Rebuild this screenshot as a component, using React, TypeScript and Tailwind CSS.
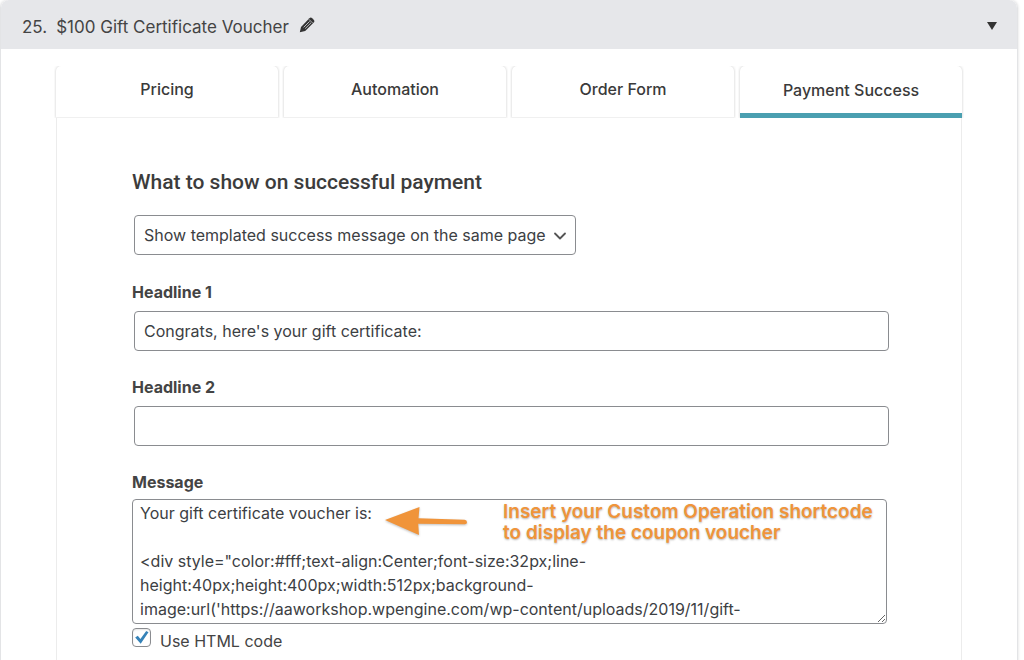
import { useState } from 'react';
import { ChevronDown } from 'lucide-react';

const TABS = ['Pricing', 'Automation', 'Order Form', 'Payment Success'];

const DEFAULT_MESSAGE = `Your gift certificate voucher is:

<div style="color:#fff;text-align:Center;font-size:32px;line-height:40px;height:400px;width:512px;background-image:url('https://aaworkshop.wpengine.com/wp-content/uploads/2019/11/gift-`;

const labelClass = 'block font-bold leading-5 text-[#444]';
const inputClass =
  'block w-full h-10 px-[9px] rounded-[4px] border border-[#8a8c90] bg-white text-[#3c4043] focus:outline-none focus:border-[#4a9fb0]';

function PencilIcon() {
  return (
    <svg width="16" height="16" viewBox="0 0 16 16" fill="none" aria-hidden="true">
      <path d="M.8 15.2 2 9.9 10.4 1.3a2 2 0 0 1 2.8 0l1.5 1.5a2 2 0 0 1 0 2.8L6.2 14Z" fill="#333" />
      <path d="M4.6 10.4 10.6 4.4M6.2 11.6l5.8-5.8" stroke="#e6e7ea" strokeWidth="0.8" />
      <path d="m10 2.4 3.6 3.6" stroke="#e6e7ea" strokeWidth="0.7" />
    </svg>
  );
}

function ShortcodeNote() {
  return (
    <div className="pointer-events-none absolute left-[252px] top-[2px] flex items-start gap-[35px] text-[#f0943a]">
      <svg width="84" height="38" viewBox="0 0 84 38" className="drop-shadow-[0_1px_1px_rgba(0,0,0,0.25)]" aria-hidden="true">
        <path d="M1 19 35.5 6 34.5 17.2 80.5 18.8Q83 19 83 21.3 83 23.5 80.5 23.3L34.2 22.8 35 34Z" fill="currentColor" />
      </svg>
      <p className="text-[19px] leading-[21px] font-semibold whitespace-nowrap [text-shadow:0_1px_2px_rgba(0,0,0,0.3)]">
        Insert your Custom Operation shortcode
        <br />
        to display the coupon voucher
      </p>
    </div>
  );
}

export default function App() {
  const [open, setOpen] = useState(true);
  const [activeTab, setActiveTab] = useState('Payment Success');

  return (
    <div className="min-h-screen bg-white pr-[6px] text-base text-[#444] font-['Inter','Liberation_Sans',sans-serif]">
      <section className="min-h-screen rounded-t-lg border-x border-[#e3e4e6] shadow-[0_0_3px_rgba(0,0,0,0.15)]">
        <header className="flex items-center h-[49px] pl-[21px] pr-5 pt-1 rounded-t-lg bg-[#e6e7ea] text-[17px] leading-6">
          <span className="mr-[9px]">25.</span>
          <h1>$100 Gift Certificate Voucher</h1>
          <button type="button" aria-label="Edit name" className="ml-[10px] pb-1">
            <PencilIcon />
          </button>
          <button
            type="button"
            aria-label="Toggle product"
            aria-expanded={open}
            onClick={() => setOpen(!open)}
            className="ml-auto pb-[2px]"
          >
            <svg width="10" height="8" viewBox="0 0 10 8" aria-hidden="true">
              <path d="M0 0h10L5 8Z" fill="#333" />
            </svg>
          </button>
        </header>

        {open && (
          <div className="pt-[17px] pl-[55px] pr-[55px]">
            <div role="tablist" className="grid grid-cols-4 gap-[6px]">
              {TABS.map((tab) => (
                <button
                  key={tab}
                  type="button"
                  role="tab"
                  aria-selected={tab === activeTab}
                  onClick={() => setActiveTab(tab)}
                  className={`h-[52px] rounded-t-[5px] font-medium text-[#3a3a3a] shadow-[0_0_3px_rgba(0,0,0,0.22)] [clip-path:inset(0_-2px_0_-2px)] ${
                    tab === activeTab ? 'border-b-[5px] border-[#4a9fb0]' : 'border-b border-[#f0f0f0] pb-[5px]'
                  }`}
                >
                  {tab}
                </button>
              ))}
            </div>

            <form className="border-x border-[#ececec] pt-[50px] pl-[75px] pr-[72px] pb-10" onSubmit={(e) => e.preventDefault()}>
              <h2 className="text-[21px] leading-7 font-medium text-[#3c3c3c] font-['Roboto','Liberation_Sans',sans-serif]">
                What to show on successful payment
              </h2>

              <div className="pl-[2px] mt-[19px]">
                <div className="relative w-fit">
                  <select
                    aria-label="What to show on successful payment"
                    className={`${inputClass} appearance-none pr-[29px]`}
                  >
                    <option>Show templated success message on the same page</option>
                  </select>
                  <ChevronDown size={20} strokeWidth={2.2} className="pointer-events-none absolute right-[6px] top-[11px] text-[#555]" />
                </div>
              </div>

              <label htmlFor="headline1" className={`${labelClass} mt-[27px]`}>
                Headline 1
              </label>
              <div className="pl-[2px] mt-[9px]">
                <input id="headline1" type="text" defaultValue="Congrats, here's your gift certificate:" className={inputClass} />
              </div>

              <label htmlFor="headline2" className={`${labelClass} mt-[26px]`}>
                Headline 2
              </label>
              <div className="pl-[2px] mt-[9px]">
                <input id="headline2" type="text" className={inputClass} />
              </div>

              <label htmlFor="message" className={`${labelClass} mt-[26px]`}>
                Message
              </label>
              <div className="relative mt-[7px] pr-[2px]">
                <textarea
                  id="message"
                  defaultValue={DEFAULT_MESSAGE}
                  className="block w-full h-[125px] px-[7px] pt-px leading-6 rounded-[4px] border border-[#8a8c90] bg-white text-[#3c4043] resize-y overflow-hidden focus:outline-none focus:border-[#4a9fb0]"
                />
                <ShortcodeNote />
              </div>

              <div className="flex items-start mt-1">
                <span className="grid">
                  <input
                    id="use-html"
                    type="checkbox"
                    defaultChecked
                    className="peer col-start-1 row-start-1 appearance-none size-[19px] rounded-[4px] border border-[#8a8c90] bg-white shadow-[inset_0_1px_2px_rgba(0,0,0,0.1)]"
                  />
                  <svg
                    viewBox="0 0 19 19"
                    className="col-start-1 row-start-1 size-[19px] pointer-events-none invisible peer-checked:visible"
                    aria-hidden="true"
                  >
                    <path d="M3.2 9.6 5.8 7.8l2.6 3.2L14.2 3l2.3 1.2L8.7 15.8Z" fill="#3582b8" />
                  </svg>
                </span>
                <label htmlFor="use-html" className="ml-[9px] pt-[3px] leading-5">
                  Use HTML code
                </label>
              </div>
            </form>
          </div>
        )}
      </section>
    </div>
  );
}
